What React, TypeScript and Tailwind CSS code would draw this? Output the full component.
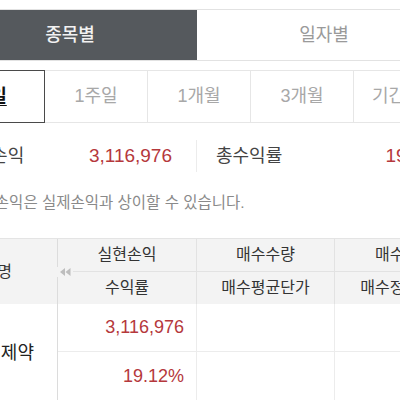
import React from 'react'

const KR = { fontFamily: '"Liberation Sans", "Noto Sans CJK KR", sans-serif' }

const PERIODS = ['1일', '1주일', '1개월', '3개월', '기간설정']

function DoubleLeft() {
  return (
    <svg width="11" height="8" viewBox="0 0 11 8" className="block">
      <path d="M5 0 L0 4 L5 8 Z" fill="#bdbdbd" />
      <path d="M10.5 0 L5.5 4 L10.5 8 Z" fill="#bdbdbd" />
    </svg>
  )
}

export default function App() {
  return (
    <div className="w-[400px] h-[400px] overflow-hidden bg-white" style={KR}>
      <div className="w-[540px] -ml-[57px] pt-[9px]">
        {/* 종목별 / 일자별 tabs */}
        <div className="flex h-[52px] border-t border-b border-[#e2e2e2]">
          <div className="w-[254px] flex items-center justify-center bg-[#55595d] text-[18px] text-[#f2f2f2] font-medium">
            종목별
          </div>
          <div className="w-[254px] flex items-center justify-center bg-white text-[18px] text-[#9a9a9a]">
            일자별
          </div>
        </div>

        {/* period selector */}
        <div className="flex mt-[9px] -ml-px h-[53px] border-t border-b border-[#e6e6e6]">
          {PERIODS.map((p, i) =>
            i === 0 ? (
              <div
                key={p}
                className="w-[103px] shrink-0 flex items-center justify-center border-[1.5px] border-[#4a4a4a] -mt-px -mb-px text-[18px] font-bold text-[#111] underline underline-offset-[3px]"
              >
                {p}
              </div>
            ) : (
              <div
                key={p}
                className="w-[103px] shrink-0 flex items-center justify-center border-r border-[#e6e6e6] text-[18px] text-[#a8a8a8]"
              >
                {p}
              </div>
            )
          )}
        </div>

        {/* summary */}
        <div className="flex items-center h-[50px] mt-[8px]">
          <div className="w-[253px] flex items-center justify-between pl-[15px] pr-[24px]">
            <span className="text-[18px] text-[#444]">실현손익</span>
            <span className="text-[19px] text-[#b5383c]">3,116,976</span>
          </div>
          <div className="w-px h-[32px] bg-[#ececec]" />
          <div className="w-[253px] flex items-center justify-between pl-[19px]">
            <span className="text-[18px] text-[#444]">총수익률</span>
            <span className="text-[19px] text-[#b5383c]">19.12%</span>
          </div>
        </div>

        {/* note */}
        <p className="mt-[10px] pl-[13px] text-[15.5px] text-[#8a8a8a]">* 실현손익은 실제손익과 상이할 수 있습니다.</p>

        {/* table */}
        <div className="mt-[24px] border-t border-[#e4e4e4]">
          <div className="flex h-[65px] bg-[#f3f3f3] text-[16px] text-[#333]">
            <div className="w-[115px] shrink-0 flex items-center justify-end pr-[45px] border-r border-[#dcdcdc]">
              종목명
            </div>
            <div className="relative w-[139px] shrink-0 flex flex-col border-r border-[#e2e2e2]">
              <div className="h-[33px] flex items-center justify-center border-b border-[#e2e2e2]">실현손익</div>
              <div className="h-[32px] flex items-center justify-center">수익률</div>
              <div className="absolute -left-px top-[28px] bg-[#f3f3f3] py-[1px] pl-[3px] pr-[2px]">
                <DoubleLeft />
              </div>
            </div>
            <div className="w-[138px] shrink-0 flex flex-col border-r border-[#e2e2e2]">
              <div className="h-[33px] flex items-center justify-center border-b border-[#e2e2e2]">매수수량</div>
              <div className="h-[32px] flex items-center justify-center">매수평균단가</div>
            </div>
            <div className="w-[139px] shrink-0 flex flex-col">
              <div className="h-[33px] flex items-center justify-center border-b border-[#e2e2e2]">매수금액</div>
              <div className="h-[32px] flex items-center justify-center">매수정산금액</div>
            </div>
          </div>

          <div className="flex h-[100px] text-[18px]">
            <div className="w-[115px] shrink-0 flex items-center justify-end pr-[23px] pb-[2px] border-r border-[#dcdcdc] text-[#222]">
              대원제약
            </div>
            <div className="w-[139px] shrink-0 flex flex-col border-r border-[#ececec] text-[#b5383c]">
              <div className="h-[48px] flex items-center justify-end pr-[12px] border-b border-[#ececec]">3,116,976</div>
              <div className="h-[48px] flex items-center justify-end pr-[12px]">19.12%</div>
            </div>
            <div className="w-[138px] shrink-0 flex flex-col border-r border-[#ececec]">
              <div className="h-[48px] border-b border-[#ececec]" />
              <div className="h-[48px]" />
            </div>
            <div className="w-[139px] shrink-0 flex flex-col">
              <div className="h-[48px] border-b border-[#ececec]" />
              <div className="h-[48px]" />
            </div>
          </div>
        </div>
      </div>
    </div>
  )
}
